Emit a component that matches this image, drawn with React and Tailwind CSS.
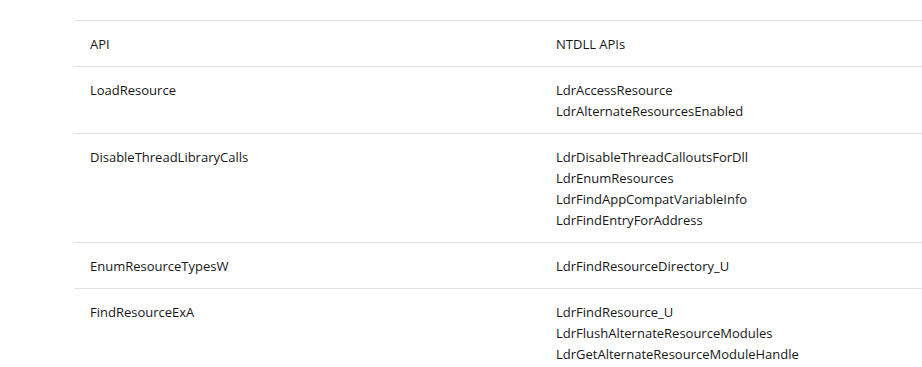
import React from 'react';

const rows = [
    { api: 'LoadResource', ntdll: ['LdrAccessResource', 'LdrAlternateResourcesEnabled'] },
    {
        api: 'DisableThreadLibraryCalls',
        ntdll: ['LdrDisableThreadCalloutsForDll', 'LdrEnumResources', 'LdrFindAppCompatVariableInfo', 'LdrFindEntryForAddress'],
    },
    { api: 'EnumResourceTypesW', ntdll: ['LdrFindResourceDirectory_U'] },
    {
        api: 'FindResourceExA',
        ntdll: ['LdrFindResource_U', 'LdrFlushAlternateResourceModules', 'LdrGetAlternateResourceModuleHandle'],
    },
];

export default function App() {
    return (
        <div className="min-h-screen bg-white pt-5 pl-[74px] text-[#171717] text-[13px] leading-[21px] font-['Open_Sans',sans-serif]">
            <table className="w-full border-collapse text-left">
                <thead>
                    <tr className="border-t border-b border-[#e1e1e1]">
                        <th className="w-[466px] px-4 pt-[13px] pb-[11px] font-normal align-top">API</th>
                        <th className="px-4 pt-[13px] pb-[11px] font-normal align-top">NTDLL APIs</th>
                    </tr>
                </thead>
                <tbody>
                    {rows.map((row) => (
                        <tr key={row.api} className="border-b border-[#e1e1e1]">
                            <td className="px-4 pt-[13px] pb-[11px] align-top">{row.api}</td>
                            <td className="px-4 pt-[13px] pb-[11px] align-top">
                                {row.ntdll.map((name) => (
                                    <div key={name}>{name}</div>
                                ))}
                            </td>
                        </tr>
                    ))}
                </tbody>
            </table>
        </div>
    );
}
